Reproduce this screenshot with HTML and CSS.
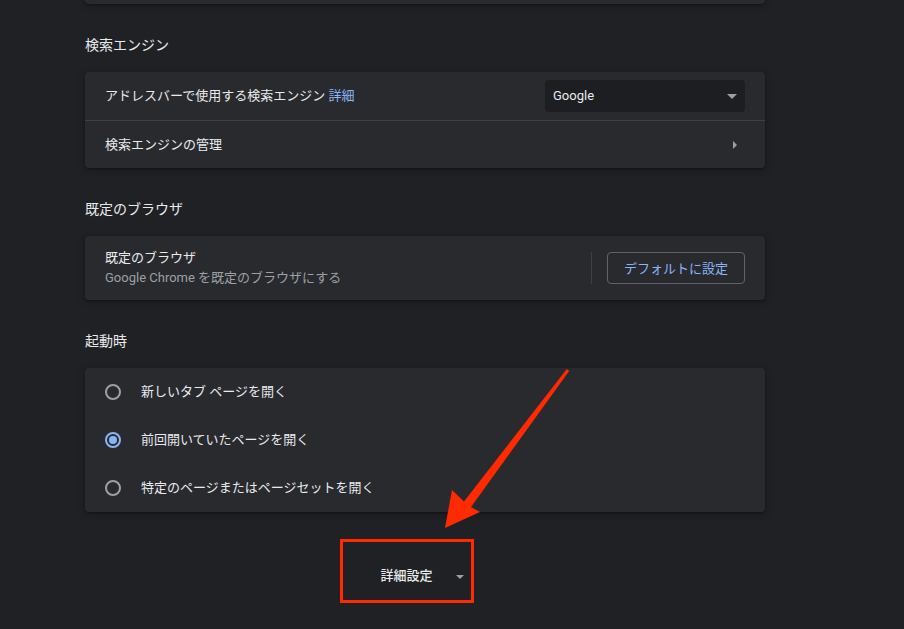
FILE: index.html
```html
<!DOCTYPE html>
<html lang="ja">
<head>
    <meta charset="UTF-8">
    <meta name="viewport" content="width=device-width, initial-scale=1.0">
    <link rel="stylesheet" href="styles.css">
</head>
<body>
    <div class="page">
        <div class="card card-top"></div>

        <h2 class="section-title">検索エンジン</h2>
        <div class="card">
            <div class="row">
                <div class="row-label">アドレスバーで使用する検索エンジン <a class="link" href="#">詳細</a></div>
                <div class="select">
                    <span>Google</span>
                    <span class="caret-down"></span>
                </div>
            </div>
            <div class="row row-divided">
                <div class="row-label">検索エンジンの管理</div>
                <span class="caret-right"></span>
            </div>
        </div>

        <h2 class="section-title">既定のブラウザ</h2>
        <div class="card">
            <div class="row row-tall">
                <div class="row-text">
                    <div class="row-label">既定のブラウザ</div>
                    <div class="row-sub">Google Chrome を既定のブラウザにする</div>
                </div>
                <div class="row-action">
                    <span class="separator"></span>
                    <button class="outline-button">デフォルトに設定</button>
                </div>
            </div>
        </div>

        <h2 class="section-title">起動時</h2>
        <div class="card">
            <div class="row radio-row">
                <span class="radio"></span>
                <span class="row-label">新しいタブ ページを開く</span>
            </div>
            <div class="row radio-row">
                <span class="radio checked"></span>
                <span class="row-label">前回開いていたページを開く</span>
            </div>
            <div class="row radio-row">
                <span class="radio"></span>
                <span class="row-label">特定のページまたはページセットを開く</span>
            </div>
        </div>

        <div class="advanced">
            <span class="advanced-label">詳細設定</span>
            <span class="caret-down small"></span>
        </div>
    </div>

    <!-- annotation drawn over the screenshot -->
    <svg class="annotation" width="904" height="629" viewBox="0 0 904 629">
        <polygon points="445,528 480,512 471,507 569.2,370.9 566.8,369.1 464,501.5 452,490" fill="#ff2a00"/>
        <rect x="341.5" y="540.5" width="131" height="61" fill="none" stroke="#ff2a00" stroke-width="3"/>
    </svg>
</body>
</html>
```

FILE: styles.css
```css
body {
    margin: 0;
    padding: 0;
    background-color: #202124;
    color: #e8eaed;
    font-family: Roboto, "Noto Sans CJK JP", sans-serif;
    font-size: 13px;
    line-height: 20px;
    width: 904px;
    height: 629px;
    overflow: hidden;
    position: relative;
}

.page {
    width: 680px;
    padding-left: 85px;
}

.card {
    background-color: #292a2d;
    border-radius: 4px;
    box-shadow: 0 1px 2px 0 rgba(0, 0, 0, 0.3), 0 2px 6px 2px rgba(0, 0, 0, 0.15);
}

.card-top {
    height: 4px;
    border-radius: 0 0 4px 4px;
}

.section-title {
    margin: 31px 0 0;
    padding-bottom: 17px;
    font-size: 14px;
    font-weight: 400;
    line-height: 20px;
    color: #e8eaed;
}

.row {
    display: flex;
    align-items: center;
    justify-content: space-between;
    height: 48px;
    padding: 0 20px;
}

.row-divided {
    border-top: 1px solid #3f4042;
    height: 47px;
}

.row-tall {
    height: 64px;
}

.link {
    color: #8ab4f8;
    text-decoration: none;
}

.row-sub {
    color: #9aa0a6;
}

.select {
    display: flex;
    align-items: center;
    justify-content: space-between;
    box-sizing: border-box;
    width: 200px;
    height: 32px;
    padding: 0 8px;
    background-color: #1d1e21;
    border-radius: 4px;
    font-size: 13px;
}

.caret-down {
    width: 0;
    height: 0;
    border-left: 5px solid transparent;
    border-right: 5px solid transparent;
    border-top: 5px solid #9aa0a6;
}

.caret-down.small {
    border-left-width: 4px;
    border-right-width: 4px;
    border-top-width: 4px;
    margin-left: 23px;
    margin-top: 1px;
}

.caret-right {
    width: 0;
    height: 0;
    margin-right: 8px;
    border-top: 4px solid transparent;
    border-bottom: 4px solid transparent;
    border-left: 4px solid #9aa0a6;
}

.row-action {
    display: flex;
    align-items: center;
}

.separator {
    width: 1px;
    height: 32px;
    background-color: #3f4042;
    margin-right: 15px;
}

.outline-button {
    box-sizing: border-box;
    width: 138px;
    height: 32px;
    padding: 0 0 2px;
    background: transparent;
    border: 1px solid #5f6368;
    border-radius: 4px;
    color: #8ab4f8;
    font-family: Roboto, "Noto Sans CJK JP", sans-serif;
    font-size: 13px;
    font-weight: 400;
}

.radio-row {
    justify-content: flex-start;
}

.radio {
    box-sizing: border-box;
    width: 16px;
    height: 16px;
    margin-right: 20px;
    border: 2px solid #9aa0a6;
    border-radius: 50%;
    position: relative;
}

.radio.checked {
    border-color: #8ab4f8;
}

.radio.checked::after {
    content: "";
    position: absolute;
    top: 2px;
    left: 2px;
    width: 8px;
    height: 8px;
    border-radius: 50%;
    background-color: #8ab4f8;
}

.advanced {
    display: flex;
    align-items: center;
    justify-content: center;
    height: 48px;
    margin-top: 40px;
    padding-right: 6px;
}

.advanced-label {
    font-weight: 500;
}

.annotation {
    position: absolute;
    top: 0;
    left: 0;
    pointer-events: none;
}
```
